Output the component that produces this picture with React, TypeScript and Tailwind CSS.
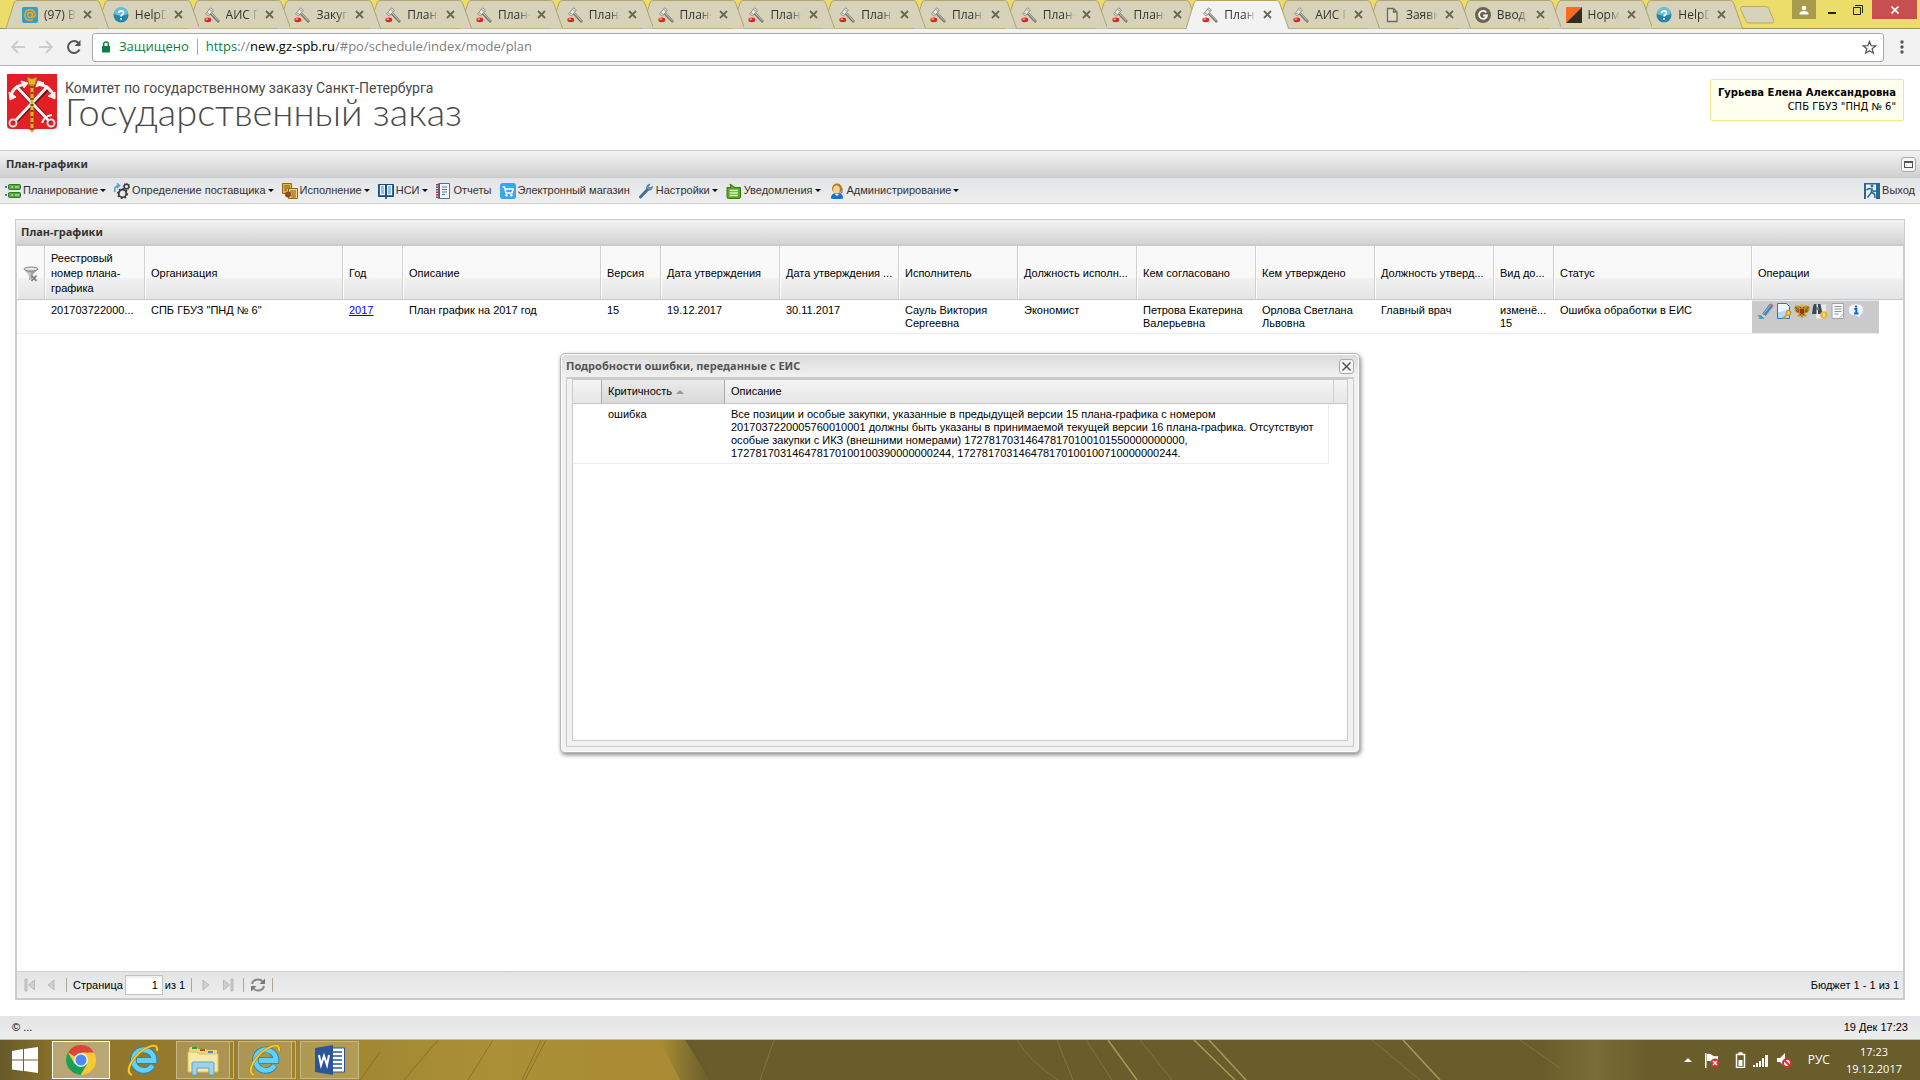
import type { ReactNode } from "react";

const tabs = [
  { icon: "mail", title: "(97) В" },
  { icon: "help", title: "HelpD" },
  { icon: "gavel", title: "АИС Г" },
  { icon: "gavel", title: "Закуп" },
  { icon: "gavel", title: "План-" },
  { icon: "gavel", title: "План-" },
  { icon: "gavel", title: "План-" },
  { icon: "gavel", title: "План-" },
  { icon: "gavel", title: "План-" },
  { icon: "gavel", title: "План-" },
  { icon: "gavel", title: "План-" },
  { icon: "gavel", title: "План-" },
  { icon: "gavel", title: "План-" },
  { icon: "gavel", title: "План-", active: true },
  { icon: "gavel", title: "АИС Г" },
  { icon: "page", title: "Заявк" },
  { icon: "g", title: "Ввод" },
  { icon: "norm", title: "Норм" },
  { icon: "help", title: "HelpD" },
];

const menu = [
  { icon: "plan", label: "Планирование", arrow: true },
  { icon: "gears", label: "Определение поставщика", arrow: true },
  { icon: "exec", label: "Исполнение", arrow: true },
  { icon: "book", label: "НСИ", arrow: true },
  { icon: "report", label: "Отчеты", arrow: false },
  { icon: "cart", label: "Электронный магазин", arrow: false },
  { icon: "wrench", label: "Настройки", arrow: true },
  { icon: "note", label: "Уведомления", arrow: true },
  { icon: "admin", label: "Администрирование", arrow: true },
];

const columns = [
  { title: "Организация", value: 'СПБ ГБУЗ "ПНД № 6"' },
  { title: "Год", value: "2017", link: true },
  { title: "Описание", value: "План график на 2017 год" },
  { title: "Версия", value: "15" },
  { title: "Дата утверждения", value: "19.12.2017" },
  { title: "Дата утверждения ...", value: "30.11.2017" },
  { title: "Исполнитель", value: "Сауль Виктория Сергеевна" },
  { title: "Должность исполн...", value: "Экономист" },
  { title: "Кем согласовано", value: "Петрова Екатерина Валерьевна" },
  { title: "Кем утверждено", value: "Орлова Светлана Львовна" },
  { title: "Должность утверд...", value: "Главный врач" },
  { title: "Вид до...", value: "изменё... 15" },
  { title: "Статус", value: "Ошибка обработки в ЕИС" },
];

const operations = [
  { icon: "pencil", label: "Редактировать" },
  { icon: "docKey", label: "Подписать" },
  { icon: "eagle", label: "Отправить в ЕИС" },
  { icon: "search", label: "Просмотр" },
  { icon: "doc", label: "Документ" },
  { icon: "info", label: "Подробности ошибки" },
];

const icons: Record<string, ReactNode> = {
  mail: (
    <>
      <rect width="16" height="16" rx="2" fill="#2f9fd0" />
      <circle cx="8" cy="8" r="2.4" fill="none" stroke="#f5a623" strokeWidth="1.5" />
      <path d="M10.4 5.6v3.2c0 2 2.9 1.5 2.9-.8A5.3 5.3 0 1 0 11 12.4" fill="none" stroke="#f5a623" strokeWidth="1.5" />
    </>
  ),
  help: (
    <>
      <circle cx="8" cy="8" r="7.5" fill="#2686a8" />
      <path d="M1 7a7 7 0 0 1 14 0q-7 3-14 0" fill="#69bfd4" />
      <path d="M5.8 6q.2-2.2 2.3-2.2 2.3 0 2.3 2 0 1.2-1.2 1.9Q8.100 8.3 8.1 9.5M8.1 11v1.7" fill="none" stroke="#fff" strokeWidth="1.7" />
    </>
  ),
  gavel: (
    <>
      <path d="M6 5.500l9 9.500" stroke="#77756c" strokeWidth="2.600" />
      <path d="M6.500 5.500l8 8.500" stroke="#cfcdc3" />
      <path d="M1.500 7L6.500.800 9.500 3 4.500 9z" fill="#e9e8e2" stroke="#8e8c82" strokeWidth=".9" />
      <path d="M2.600 5.600l3 2M5.300 2.200l3 2.200" stroke="#8e8c82" strokeWidth=".9" />
      <path d="M.5 12.200q0-1.700 3.300-1.700t3.300 1.700v1.300q0 1.700-3.300 1.700T.5 13.500z" fill="#d9281c" />
      <ellipse cx="2.800" cy="12.200" rx="1.500" ry=".9" fill="#f59a8c" />
    </>
  ),
  page: <path d="M3.5 1.5h6L13 5v9.500H3.5zM9.500 1.5V5H13" fill="#dedac6" stroke="#6f6b58" strokeWidth="1.3" />,
  g: (
    <>
      <circle cx="8" cy="8" r="8" fill="#6b6450" />
      <path d="M11.3 5.500A4 4 0 1 0 12 8.500H8.3" fill="none" stroke="#fff" strokeWidth="1.8" />
    </>
  ),
  norm: (
    <>
      <path d="M0 0h16L0 16z" fill="#ff6a1c" />
      <path d="M16 0v16H0z" fill="#352e1c" />
    </>
  ),
  plan: (
    <>
      <path d="M0 3h2v2H0zM0 11h2v2H0z" fill="#2f86b5" />
      <rect x="3.5" y="1.5" width="12" height="5" rx="1" fill="#5aa545" stroke="#2e7a22" />
      <rect x="3.5" y="9.5" width="12" height="5" rx="1" fill="#5aa545" stroke="#2e7a22" />
      <path d="M6 4h2m2 0h4M6 12h2m2 0h4" stroke="#d3efc8" strokeWidth="1.2" />
    </>
  ),
  gears: (
    <>
      <path d="M1 9Q-.5 3 5 2.5M3 .5l2.500 2L3 5" fill="none" stroke="#4ba3cf" strokeWidth="1.6" />
      <circle cx="8.5" cy="10.5" r="3.8" fill="#e8e8e8" stroke="#3c3c3c" strokeWidth="1.8" />
      <circle cx="8.5" cy="10.5" r="5" fill="none" stroke="#3c3c3c" strokeWidth="1.2" strokeDasharray="1.8 2" />
      <circle cx="12.5" cy="3.5" r="2.3" fill="#e8e8e8" stroke="#3c3c3c" strokeWidth="1.5" />
      <circle cx="12.5" cy="3.5" r="3.3" fill="none" stroke="#3c3c3c" strokeDasharray="1.2 1.3" />
    </>
  ),
  exec: (
    <>
      <path d="M.5.5h9v10h-9z" fill="#e3b747" stroke="#8c671a" />
      <path d="M2 3h6M2 5h6M2 7h3" stroke="#79581a" />
      <path d="M6.5 5.500h9v10h-9z" fill="#f0d384" stroke="#8c671a" />
      <path d="M8 8h6M8 10h6" stroke="#79581a" />
      <circle cx="6" cy="11.5" r="3" fill="#8d4a1c" />
      <circle cx="11.5" cy="13" r="2.5" fill="#c98725" />
    </>
  ),
  book: (
    <>
      <path d="M.5 1.5h15v12H.5z" fill="#2d6fa8" stroke="#174a78" />
      <path d="M2 2h5v10H2zM9 2h5v10H9z" fill="#eaf4fb" />
      <path d="M3 4h3M3 6h3M3 8h3M3 10h3M10 4h3M10 6h3M10 8h3M10 10h3" stroke="#4a8cc0" />
      <path d="M8 1v15" stroke="#174a78" strokeWidth="1.6" />
    </>
  ),
  report: (
    <>
      <path d="M2.5.5h11v15h-11z" fill="#f2f7fd" stroke="#56718f" />
      <path d="M1 1v14.5" stroke="#d2232a" strokeWidth="2" strokeDasharray="1.5 1" />
      <path d="M3.5 1v14" stroke="#d2232a" />
      <path d="M6 4h5M6 6.5h5M6 9h5M6 11.5h3" stroke="#4677b4" strokeWidth="1.2" />
    </>
  ),
  cart: (
    <>
      <rect width="16" height="16" rx="2.5" fill="#3aa6f2" />
      <path d="M2.5 4h2L6 10h6l1.200-4H5" fill="none" stroke="#fff" strokeWidth="1.5" />
      <circle cx="6.5" cy="12.3" r="1.2" fill="#fff" />
      <circle cx="11.3" cy="12.3" r="1.2" fill="#fff" />
    </>
  ),
  wrench: (
    <>
      <path d="M2.5 14L10 6" stroke="#456f8f" strokeWidth="3" strokeLinecap="round" />
      <path d="M14.5 3.500L12 5l-1.500-1.500L12 1Q8.500 1.500 8.500 5q1 3 4 2 2-1 2-3.500" fill="#6d96b3" stroke="#456f8f" strokeWidth=".7" />
    </>
  ),
  note: (
    <>
      <path d="M1 4.5h4L4 1l5 3.500h5.500v10q-.5 1-1.500 1H2.500Q1 15.500 1 14z" fill="#57a81f" stroke="#377a10" />
      <path d="M3.5 7.5H12M3.5 10H12M3.500 12.5H12" stroke="#e5f6d6" strokeWidth="1.3" />
    </>
  ),
  admin: (
    <>
      <path d="M2 15.5Q1.500 10 8 10t6 5.500q-6 1-12 0" fill="#176fd0" />
      <circle cx="8" cy="5.5" r="5" fill="#b9791b" />
      <ellipse cx="7.5" cy="6.5" rx="3.3" ry="4" fill="#f6cf99" />
      <path d="M13 5v4q-1 2-4 2" fill="none" stroke="#777" strokeWidth="1.2" />
      <path d="M5.5 11L8 13l2-2" fill="#fff" />
    </>
  ),
  exit: (
    <>
      <path d="M0 0h16v16H0z" fill="#2c678f" />
      <path d="M2 1.5h10V16H2z" fill="#e8f1f7" />
      <circle cx="8" cy="3" r="1.4" fill="#2c678f" />
      <path d="M2.5 7L5 5.500l3 .5-1 4-3.500 4.500M7.500 9.500l3 1.500.5 4M7.500 6l2 2.500 3-.5" fill="none" stroke="#2c678f" strokeWidth="1.5" />
    </>
  ),
  filter: (
    <>
      <path d="M1 3l5 6.500V14l3-1V9.500L15 3z" fill="#a3a3a3" />
      <path d="M4 5.500l3 4M7 6v7" stroke="#d5d5d5" />
      <ellipse cx="8" cy="3" rx="7" ry="2" fill="#e5e5e5" stroke="#858585" />
      <path d="M8.500 9.500l5 5.500M13.500 9.500l-5 5.500" stroke="#7c7c7c" strokeWidth="1.800" />
    </>
  ),
  pencil: (
    <>
      <path d="M4 11L11.5 1 15 3.500 7.500 13z" fill="#4b86b8" />
      <path d="M11 1.5L13 .5l2.500 2-1 1.500z" fill="#b9705c" />
      <path d="M4 11l-1 4 4.500-2z" fill="#e7cf9c" />
      <path d="M5.5 11l7-9" stroke="#90bade" />
      <path d="M0 13q3-1 5 2H1" fill="none" stroke="#2e9bc5" strokeWidth="1.3" />
    </>
  ),
  docKey: (
    <>
      <path d="M1.5.5h9l3 3v12h-12z" fill="#eef6ff" stroke="#2f74c8" />
      <path d="M2 9q6 0 11-4v10H2z" fill="#b9d9f8" />
      <circle cx="12.5" cy="10" r="2.5" fill="#f4c256" stroke="#c58514" />
      <path d="M11 11.5l-4.500 4M8 14l1.500 1.500" stroke="#dd9c22" strokeWidth="1.7" />
    </>
  ),
  eagle: (
    <>
      <path
        d="M8 4.500Q7 3 5.500 3.500L4 2 3 3 1.500 2.500 1 4 0 5l1 1.500L.5 8 2 8.500 2.500 10 4 10l1 1-2 2 2 .5L6.500 13 8 15.500 9.500 13l1.500.5 2-.5-2-2 1-1 1.500 0 .5-1.500 1.500-.5-.5-1.500L16 5l-1-1-.5-1.500L13 3l-1-1-1.500 1.500Q9 3 8 4.500"
        fill="#b79222"
      />
      <path d="M1.500 4l3.500 4M2 7.500l3 1.500M14.500 4L11 8M14 7.500L11 9M6 3.500l1 2M10 3.500l-1 2M6 12l1-1M10 12l-1-1" stroke="#5f4810" strokeWidth=".9" />
      <path d="M6 6h4v3.500L8 11.500 6 9.500z" fill="#b81f1b" />
      <path d="M6 1.500l1 .5 1-1.500L9 2l1-.5-.5 2h-3z" fill="#e2b929" />
    </>
  ),
  search: (
    <>
      <path d="M4 1.500h10v14H4z" fill="#e8e8e8" />
      <path d="M1 4l1-3h2.500v10H0zM6 1h2.500l2 10H6z" fill="#3b4854" />
      <path d="M4 4h3v3H4z" fill="#6b7c8a" />
      <circle cx="12" cy="12" r="3.8" fill="#e0b83e" />
      <path d="M12 10v4" stroke="#f7e5a6" strokeWidth="1.5" />
    </>
  ),
  doc: (
    <>
      <path d="M2 .5h11.500v15H2z" fill="#f7f7f7" stroke="#a3a3a3" />
      <path d="M4.500 3.500h7M4.500 6h7M4.500 8.500h7M4.500 11h4" stroke="#8f969c" />
      <path d="M9 15.500l4.500-4.500" stroke="#a3a3a3" />
    </>
  ),
  info: (
    <>
      <path d="M8 .5q7.500 0 7.500 6.500 0 4-3.500 5.500v3L8.500 13Q.5 13 .5 7T8 .5" fill="#f3f5ff" stroke="#c6c9e8" />
      <path d="M8 2.500v2M6.300 6h2v4.500M6 10.500h4.500" fill="none" stroke="#1766d4" strokeWidth="2" />
    </>
  ),
};

function Icon({ name }: { name: string }) {
  return (
    <svg viewBox="0 0 16 16" className="size-4 shrink-0" aria-hidden="true">
      {icons[name]}
    </svg>
  );
}

function BrowserTab({ icon, title, active, order }: { icon: string; title: string; active?: boolean; order: number }) {
  return (
    <div className="relative h-[29px] min-w-0 flex-1" style={{ zIndex: order }}>
      <svg viewBox="0 0 103 29" preserveAspectRatio="none" className="absolute top-0 left-0 h-[29px] w-[113%]">
        <path
          d="M0 28.5L8 3Q9 .5 11 .5H91Q93 .5 94 3L103 28.5"
          fill={active ? "#f2f2f2" : "#d7d2b9"}
          stroke={active ? "#b3a35c" : "#aea571"}
        />
        {active && <path d="M1 28.5H102" stroke="#f2f2f2" />}
      </svg>
      <div className="relative flex h-full items-center pl-4">
        <Icon name={icon} />
        <span className="ml-1.5 w-8 whitespace-nowrap text-xs text-[#333] [mask-image:linear-gradient(to_right,black_65%,transparent)]">
          {title}
        </span>
        <button aria-label="Закрыть вкладку" className="ml-[7px]">
          <svg viewBox="0 0 9 9" className="size-[9px]">
            <path d="M1 1l7 7M8 1L1 8" stroke="#6a6757" strokeWidth="1.8" />
          </svg>
        </button>
      </div>
    </div>
  );
}

function Browser() {
  return (
    <header className="font-['Open_Sans','Noto_Sans',sans-serif]">
      <div className="relative flex h-[29px] bg-[#ecdc69] pl-1.5 shadow-[inset_0_-1px_#9d9250]">
        <div className="isolate flex min-w-0 flex-1">
          {tabs.map((tab, i) => (
            <BrowserTab key={i} {...tab} order={tab.active ? 50 : 30 - i} />
          ))}
        </div>
        <div className="flex w-[189px] items-start">
          <button aria-label="Новая вкладка" className="mt-1.5 ml-[9px]">
            <svg viewBox="0 0 35 18" className="h-[18px] w-[35px]">
              <path d="M3 .5H26Q28 .5 29 3L34 15q0 2-2 2H9q-2 0-3-2L.5 3Q.5.5 3 .5" fill="#d7d2b9" stroke="#b5aa6c" />
            </svg>
          </button>
          <button aria-label="Профиль" className="ml-[17px] flex h-[19px] w-6 items-center justify-center bg-[#a79c4c]">
            <svg viewBox="0 0 10 10" className="size-2.5" fill="#fff">
              <circle cx="5" cy="3" r="2.3" />
              <path d="M.5 9.5V8q1-2 4.500-2t4.500 2v1.500z" />
            </svg>
          </button>
          <button aria-label="Свернуть" className="ml-3 flex h-[19px] w-2 items-center">
            <span className="mt-1.5 h-0.5 w-2 bg-[#222]" />
          </button>
          <button aria-label="Восстановить" className="ml-[17px] flex h-[19px] items-center">
            <svg viewBox="0 0 10 10" className="size-2.5" fill="none" stroke="#222">
              <path d="M.5 2.5h7v7h-7zM2 .5h7.5V8" />
            </svg>
          </button>
          <button aria-label="Закрыть" className="ml-[9px] flex h-[19px] w-[45px] items-center justify-center bg-[#c84f50]">
            <svg viewBox="0 0 8 8" className="size-2" stroke="#fff" strokeWidth="1.6">
              <path d="M.5.5l7 7M7.5.5l-7 7" />
            </svg>
          </button>
        </div>
      </div>
      <div className="flex h-[37px] items-center border-b border-[#b3b3b3] bg-[#f2f2f2] pl-2.5">
        <button aria-label="Назад">
          <svg viewBox="0 0 16 16" className="size-4" fill="none" stroke="#ccc" strokeWidth="1.8">
            <path d="M15 8H2M8 2L2 8l6 6" />
          </svg>
        </button>
        <button aria-label="Вперёд" className="ml-3">
          <svg viewBox="0 0 16 16" className="size-4" fill="none" stroke="#ccc" strokeWidth="1.8">
            <path d="M1 8h13M8 2l6 6-6 6" />
          </svg>
        </button>
        <button aria-label="Обновить" className="ml-3">
          <svg viewBox="0 0 16 16" className="size-4" fill="none" stroke="#555" strokeWidth="2">
            <path d="M13.5 10.5A6 6 0 1 1 12.5 4" />
            <path d="M14.5 1v6h-6z" fill="#555" stroke="none" />
          </svg>
        </button>
        <div className="ml-2.5 flex h-[29px] min-w-0 flex-1 items-center rounded-[3px] border border-[#a9a9a9] bg-white pl-2">
          <svg viewBox="0 0 10 12" className="h-3 w-2.5" fill="#0b8043">
            <path d="M1 5h8v6.500H1z" />
            <path d="M2.7 5V3q0-2 2.300-2t2.300 2v2" fill="none" stroke="#0b8043" strokeWidth="1.4" />
          </svg>
          <span className="ml-2 text-[13px] text-[#0b8043]">Защищено</span>
          <span className="mx-2 h-4 w-px bg-[#aaa]" />
          <span className="min-w-0 flex-1 truncate text-[13px] text-[#808080]">
            <span className="text-[#0b8043]">https</span>://<span className="text-black">new.gz-spb.ru</span>/#po/schedule/index/mode/plan
          </span>
          <button aria-label="Добавить в закладки" className="mr-1.5">
            <svg viewBox="0 0 16 16" className="size-[15px]" fill="none" stroke="#555" strokeWidth="1.3">
              <path d="M8 1.500l1.800 4.600 4.900.2-3.900 3 1.400 4.800L8 11.400l-4.200 2.700 1.400-4.800-3.900-3 4.900-.2z" />
            </svg>
          </button>
        </div>
        <button aria-label="Меню" className="mr-4 ml-4">
          <svg viewBox="0 0 4 14" className="h-3.5 w-1" fill="#555">
            <circle cx="2" cy="2" r="1.7" />
            <circle cx="2" cy="7" r="1.7" />
            <circle cx="2" cy="12" r="1.7" />
          </svg>
        </button>
      </div>
    </header>
  );
}

function Emblem() {
  return (
    <svg viewBox="0 0 50 60" className="h-[60px] w-[50px] shrink-0" fill="none">
      <path d="M0 0h50v51q0 4-4 4H30q-4 0-5 4-1-4-5-4H4q-4 0-4-4z" fill="#e31f26" />
      <g stroke="#6d1317" strokeWidth="4.5">
        <path d="M11 14L43 48M41 14L8 48" />
      </g>
      <g stroke="#f2f2f2" strokeWidth="3">
        <path d="M9 12L42 47M41 12L9 46" />
        <path d="M4 24Q4 13 18 10" />
        <path d="M2 18l1 8 6-3zM14 7l7 2-4 5z" fill="#f2f2f2" strokeWidth="1" />
        <path d="M31 10q13 2 16 13" />
        <path d="M29 13l2-6 6 2zM41 22l7 3 0-7z" fill="#f2f2f2" strokeWidth="1" />
        <path d="M35 49q2-7 10-8" strokeWidth="2" />
      </g>
      <circle cx="6" cy="49" r="3.5" stroke="#ddd" strokeWidth="2" />
      <circle cx="44" cy="49" r="3.5" stroke="#ddd" strokeWidth="2" />
      <path d="M25 9v48" stroke="#e7b622" strokeWidth="3" />
      <path d="M25 12v44" stroke="#7a4f12" strokeDasharray="2 4" strokeWidth="3" />
      <path d="M20 3l5 2 5-2-2 8h-6z" fill="#e7b622" stroke="#a5741a" />
    </svg>
  );
}

function MenuArrow() {
  return <span className="border-x-[3px] border-t-[3px] border-x-transparent border-t-black" />;
}

function SiteHeader() {
  return (
    <div className="flex h-[84px] items-start justify-between pt-2 pr-4 pl-[7px]">
      <div className="flex">
        <Emblem />
        <div className="ml-2 text-[#4a4a4a]">
          <div className="pt-1 font-['Roboto','Liberation_Sans',sans-serif] text-sm leading-5">
            Комитет по государственному заказу Санкт-Петербурга
          </div>
          <h1 className="font-['Lato','Inter',sans-serif] text-[38px] leading-[26px] font-light">Государственный заказ</h1>
        </div>
      </div>
      <div className="mt-[5px] rounded-xs border border-[#f0e68c] bg-[#fffff0] px-[7px] py-1.5 text-right font-['DejaVu_Sans',sans-serif] text-[10px] leading-[14px] text-black">
        <b>Гурьева Елена Александровна</b>
        <div>СПБ ГБУЗ "ПНД № 6"</div>
      </div>
    </div>
  );
}

function PlanTable() {
  const th = "border-r border-b border-[#d0d0d0] border-b-[#c5c5c5] pt-0.5 pr-1 pl-1.5 text-left align-middle font-normal leading-[15px] shadow-[inset_1px_0_#fff]";
  const td = "border-b border-[#ededed] pt-1 pr-1 pb-[3px] pl-1.5 align-top leading-[13px]";

  return (
    <table className="w-full table-fixed border-separate border-spacing-0 text-[11px] text-black">
      <colgroup>
        <col className="w-7" />
        <col className="w-[100px]" />
        <col className="w-[198px]" />
        <col className="w-[60px]" />
        <col className="w-[198px]" />
        <col className="w-[60px]" />
        <col className="w-[119px]" span={7} />
        <col className="w-[60px]" />
        <col className="w-[198px]" />
        <col className="w-[127px]" />
        <col />
      </colgroup>
      <thead>
        <tr className="h-[54px] bg-linear-to-b from-[#f9f9f9] from-60% via-[#f1f1f1] via-60% to-[#e3e4e6]">
          <th className={th}>
            <Icon name="filter" />
          </th>
          <th className={th}>Реестровый номер плана-графика</th>
          {columns.map((col) => (
            <th key={col.title} className={`${th} whitespace-nowrap`}>
              {col.title}
            </th>
          ))}
          <th colSpan={2} className={`${th} border-r-0`}>
            Операции
          </th>
        </tr>
      </thead>
      <tbody>
        <tr>
          <td className={td} />
          <td className={td}>201703722000...</td>
          {columns.map((col) => (
            <td key={col.title} className={td}>
              {col.link ? (
                <a href="#year" className="text-[#00f] underline">
                  {col.value}
                </a>
              ) : (
                col.value
              )}
            </td>
          ))}
          <td className="border-t border-b border-[#ededed] bg-[#cacaca] pt-0.5 pl-1.5 align-top">
            <div className="flex gap-0.5">
              {operations.map((op) => (
                <button key={op.icon} aria-label={op.label}>
                  <Icon name={op.icon} />
                </button>
              ))}
            </div>
          </td>
          <td />
        </tr>
      </tbody>
    </table>
  );
}

function Separator() {
  return <span className="h-3.5 w-px bg-[#aca899]" />;
}

function PagerButton({ label, d }: { label: string; d: string }) {
  return (
    <button aria-label={label} className="flex size-4 items-center justify-center">
      <svg viewBox="0 0 12 14" className="h-3.5 w-3" fill="#cfcfcf" stroke="#aaa" strokeWidth=".7">
        <path d={d} />
      </svg>
    </button>
  );
}

function Pager() {
  return (
    <div className="flex h-[27px] items-center border-t border-[#d0d0d0] bg-linear-to-b from-[#e3e4e6] to-[#eee] pr-1 pl-[5px] text-[11px] text-black">
      <PagerButton label="Первая" d="M1 1h2v12H1zM10.5 2v10L4.500 7z" />
      <span className="w-[5px]" />
      <PagerButton label="Предыдущая" d="M9 2v10L3 7z" />
      <span className="w-[7px]" />
      <Separator />
      <label htmlFor="page" className="ml-1.5">
        Страница
      </label>
      <input
        id="page"
        defaultValue="1"
        className="mx-0.5 h-5 w-[38px] border border-[#c1c1c1] bg-white px-1 text-right text-[11px] shadow-[inset_0_2px_2px_#eee]"
      />
      <span className="mr-1.5">из 1</span>
      <Separator />
      <span className="w-1.5" />
      <PagerButton label="Следующая" d="M3 2v10l6-5z" />
      <span className="w-1.5" />
      <PagerButton label="Последняя" d="M1.500 2v10l6-5zM9 1h2v12H9z" />
      <span className="w-[7px]" />
      <Separator />
      <button aria-label="Обновить список" className="mx-1.5">
        <svg viewBox="0 0 16 16" className="size-4" fill="none" stroke="#888" strokeWidth="2">
          <path d="M2 7Q3 2.500 8 2.500q3 0 4.500 2M14 9q-1 4.500-6 4.500-3 0-4.500-2" />
          <path d="M15 1.500V7H9.500zM1 14.500V9h5.500z" fill="#777" stroke="none" />
        </svg>
      </button>
      <Separator />
      <span className="ml-auto">Бюджет 1 - 1 из 1</span>
    </div>
  );
}

function ErrorDialog() {
  const th = "border-b border-[#c5c5c5] px-1.5 text-left font-normal";

  return (
    <section
      role="dialog"
      aria-label="Подробности ошибки, переданные с ЕИС"
      className="flex h-[400px] w-[800px] flex-col rounded-[5px] border border-[#b5b5b5] bg-[#f1f1f1] px-[5px] pb-[5px] shadow-[1px_2px_4px_#888,inset_0_0_0_1px_#fff]"
    >
      <div className="-mx-1 mt-px flex h-[22px] items-center justify-between rounded-t bg-linear-to-b from-[#dcdcdc] to-[#f1f1f1] px-1">
        <h2 className="font-['Noto_Sans','Open_Sans',sans-serif] text-[11px] leading-4 font-bold text-[#555]">
          Подробности ошибки, переданные с ЕИС
        </h2>
        <button aria-label="Закрыть окно" className="flex size-[15px] items-center justify-center rounded-[3px] border border-[#aaa] bg-[#f5f5f5]">
          <svg viewBox="0 0 9 9" className="size-[9px]" stroke="#555" strokeWidth="1.5">
            <path d="M.5.5l8 8M8.500.5l-8 8" />
          </svg>
        </button>
      </div>
      <div className="flex flex-1 border border-t-2 border-[#cbcbcb] px-px pb-px">
        <div className="flex flex-1 bg-[#f1f1f1] px-1 pb-1">
          <div className="flex-1 border border-[#cbcbcb] bg-white">
            <table className="w-full table-fixed border-separate border-spacing-0 text-[11px] text-black">
              <colgroup>
                <col className="w-7" />
                <col className="w-[124px]" />
                <col />
                <col className="w-[5px]" />
                <col className="w-[13px]" />
              </colgroup>
              <thead>
                <tr className="h-6 bg-linear-to-b from-[#f5f5f5] to-[#e6e6e6]">
                  <th className={th} aria-label="Номер" />
                  <th className={`${th} border-x border-x-[#aaa] bg-linear-to-b from-[#ebebeb] to-[#d9d9d9]`}>
                    <span className="flex items-center gap-1">
                      Критичность
                      <span className="border-x-4 border-b-4 border-x-transparent border-b-[#999]" />
                    </span>
                  </th>
                  <th colSpan={2} className={`${th} border-r border-r-[#d0d0d0]`}>
                    Описание
                  </th>
                  <th className={th} aria-label="Меню" />
                </tr>
              </thead>
              <tbody>
                <tr className="align-top leading-[13px]">
                  <td className="border-b border-[#ededed]" />
                  <td className="border-b border-[#ededed] px-[7px] pt-1">ошибка</td>
                  <td className="border-r border-b border-[#ededed] px-1.5 pt-1 pb-[3px]">
                    Все позиции и особые закупки, указанные в предыдущей версии 15 плана-графика с номером
                    2017037220005760010001 должны быть указаны в принимаемой текущей версии 16 плана-графика. Отсутствуют
                    особые закупки с ИКЗ (внешними номерами) 172781703146478170100101550000000000,
                    172781703146478170100100390000000244, 172781703146478170100100710000000244.
                  </td>
                  <td colSpan={2} />
                </tr>
              </tbody>
            </table>
          </div>
        </div>
      </div>
    </section>
  );
}

function IeLogo() {
  return (
    <svg viewBox="0 0 32 32" className="size-8" fill="none">
      <path d="M25.5 21.5A10.3 10.3 0 1 1 27 16.500H10" stroke="#1b85bd" strokeWidth="6.500" />
      <path d="M25.5 21.5A10.3 10.3 0 1 1 27 16.500H10" stroke="#63d0f5" strokeWidth="4.800" />
      <path d="M5 31Q-1 29 4 19 12 6 24 2q7-2 6 5" stroke="#b58108" strokeWidth="2.800" />
      <path d="M5 31Q-1 29 4 19 12 6 24 2q7-2 6 5" stroke="#f7cc33" strokeWidth="1.800" />
    </svg>
  );
}

function Taskbar() {
  const running = "flex h-[38px] items-center justify-center border border-[#c6b887] bg-[#d6cba0]/30";

  return (
    <footer className="relative flex h-10 items-center overflow-hidden bg-[#685d2b] font-['Open_Sans','Noto_Sans',sans-serif] text-xs text-white">
      <svg viewBox="0 0 1920 40" preserveAspectRatio="none" className="absolute inset-0 size-full" fill="none">
        <defs>
          <linearGradient id="wall">
            <stop offset="0" stopColor="#665a2b" />
            <stop offset=".08" stopColor="#8c722a" />
            <stop offset=".35" stopColor="#9b8030" />
            <stop offset=".7" stopColor="#ab9037" />
            <stop offset="1" stopColor="#a88a33" />
          </linearGradient>
          <linearGradient id="edge">
            <stop offset="0" stopColor="#655b2b" stopOpacity="0" />
            <stop offset="1" stopColor="#655b2b" />
          </linearGradient>
          <linearGradient id="glow">
            <stop offset="0" stopColor="#7a6c36" stopOpacity="0" />
            <stop offset=".5" stopColor="#7a6c36" />
            <stop offset="1" stopColor="#7a6c36" stopOpacity="0" />
          </linearGradient>
        </defs>
        <path d="M0 0H685L710 40H0z" fill="url(#wall)" />
        <path d="M660 0H690L712 40H680z" fill="url(#edge)" />
        <path d="M1540 0h110v40h-110z" fill="url(#glow)" />
        <path d="M438 0L404 40M493 0L468 40M541 0L522 40M546 0L525 40M380 12L360 40" stroke="#846b24" strokeOpacity=".8" />
        <path
          d="M774 0L760 40M1017 0Q1030 22 1058 40M1057 0L1073 40M1086 0L1112 40M1140 0L1172 40M1372 0L1420 40M1520 0L1560 28"
          stroke="#8b7b3c"
          strokeOpacity=".8"
        />
        <path d="M1108 0L1137 40M1194 0L1235 40M1209 0L1246 40M1403 0L1440 40" stroke="#aa9a56" strokeWidth="1.5" />
      </svg>
      <div className="relative flex items-center">
        <button aria-label="Пуск" className="flex w-[52px] justify-center pr-0.5">
          <svg viewBox="0 0 26 26" className="size-[26px]" fill="#fff">
            <path d="M0 4l11-2v10.500H0zM12 2l14-2v12.500H12zM0 13.500h11V24L0 22.500zM12 13.500h14V26l-14-2z" />
          </svg>
        </button>
        <button aria-label="Google Chrome" className="flex h-[38px] w-[58px] items-center justify-center border border-white bg-[#cabc96]/70">
          <svg viewBox="0 0 30 30" className="size-[30px]">
            <circle cx="15" cy="15" r="15" fill="#f9c835" />
            <path d="M15 15L2 7.500A15 15 0 0 1 28 7.500H15z" fill="#db4437" />
            <path d="M2 7.500A15 15 0 0 0 14.500 30l7-11.500H15L8.500 18.700z" fill="#1a9f5a" />
            <circle cx="15" cy="15" r="7" fill="#f1f1f1" />
            <circle cx="15" cy="15" r="5.500" fill="#4c8bf5" />
          </svg>
        </button>
        <button aria-label="Internet Explorer" className="flex w-[66px] justify-center">
          <IeLogo />
        </button>
        <button aria-label="Проводник" className={`${running} w-[54px]`}>
          <svg viewBox="0 0 32 32" className="size-8">
            <path d="M2 5l1-2h7l1 2h8l1 1h10v6H2z" fill="#ecd77e" />
            <path d="M5 3h5v2H5z" fill="#24a63d" />
            <path d="M13 5h5v2h-5z" fill="#cf4a2c" />
            <path d="M21 7h5v2h-5z" fill="#3b8ed2" />
            <path d="M1 8h9l2 2h19v18H1z" fill="#f6e9a5" stroke="#d9bf62" />
            <path d="M5 31V19q0-1 2-1h18q2 0 2 1v12h-5v-7H10v7z" fill="#9fd2ea" stroke="#5ea4c6" />
          </svg>
        </button>
        <span className="h-[38px] w-1 border-y border-r border-[#c6b887]" />
        <button aria-label="Internet Explorer, открытые окна" className={`${running} ml-1 w-[54px]`}>
          <IeLogo />
        </button>
        <span className="h-[38px] w-1 border-y border-r border-[#c6b887]" />
        <button aria-label="Microsoft Word" className={`${running} ml-1 w-[59px]`}>
          <svg viewBox="0 0 30 30" className="size-[30px]">
            <path d="M15 3h14.500v24H15z" fill="#fff" stroke="#2b579a" />
            <path d="M18 7h9M18 11h9M18 15h9M18 19h9M18 23h9" stroke="#2b579a" strokeWidth="1.5" />
            <path d="M0 3l18-3v30L0 27z" fill="#2b579a" />
            <path d="M4 10l2 10 3-9 3 9 2-10" fill="none" stroke="#fff" strokeWidth="2" />
          </svg>
        </button>
      </div>
      <div className="relative ml-auto flex items-center pr-[18px]">
        <svg viewBox="0 0 108 16" className="h-4 w-[108px]" fill="#fff">
          <path d="M0 10l4-4 4 4z" />
          <path d="M21 1h1.500v15H21zM23 2q3-1 5 1t6 1v7q-3 1-6-1t-5-1z" />
          <circle cx="31" cy="11" r="4.500" fill="#d33231" />
          <path d="M29 9l4 4M33 9l-4 4" stroke="#fff" strokeWidth="1.3" />
          <path d="M52.500 2.500h8v13h-8zM54.500 1h4" fill="none" stroke="#fff" strokeWidth="1.5" />
          <path d="M54.500 8h4v6h-4zM69 13h2v2h-2zM72 11h2v4h-2zM75 9h2v6h-2zM78 6h2v9h-2zM81 3h3v12h-3zM93 6h3l5-5v14l-5-5h-3z" />
          <circle cx="103" cy="11" r="4" fill="#fff" stroke="#d33231" strokeWidth="2" />
          <path d="M100 8l6 6" stroke="#d33231" strokeWidth="2" />
        </svg>
        <span className="ml-4">РУС</span>
        <div className="ml-4 text-center text-[11px] leading-[17px]">
          17:23
          <br />
          19.12.2017
        </div>
      </div>
    </footer>
  );
}

export default function App() {
  return (
    <div className="flex min-h-screen flex-col bg-white font-['Liberation_Sans',Arial,sans-serif]">
      <Browser />
      <main className="relative flex flex-1 flex-col">
        <SiteHeader />
        <div className="flex h-7 items-center justify-between border-y border-[#cbcbcb] bg-linear-to-b from-[#f3f3f3] to-[#d0d0d0] pr-1 pl-1.5">
          <h2 className="font-['Noto_Sans','Open_Sans',sans-serif] text-[11px] font-bold text-[#333]">План-графики</h2>
          <button aria-label="Развернуть" className="flex size-[15px] items-center justify-center rounded-[3px] border border-[#aaa] bg-[#f5f5f5]">
            <span className="h-[7px] w-[9px] border border-t-2 border-[#555]" />
          </button>
        </div>
        <nav className="flex h-[26px] items-center gap-2 border-b border-[#d0d0d0] bg-linear-to-b from-[#e3e4e6] to-[#eee] pr-[5px] pl-[5px] text-[11px] text-[#333]">
          {menu.map((item) => (
            <button key={item.label} className="flex items-center gap-0.5 whitespace-nowrap">
              <Icon name={item.icon} />
              {item.label}
              {item.arrow && <MenuArrow />}
            </button>
          ))}
          <button className="ml-auto flex items-center gap-0.5">
            <Icon name="exit" />
            Выход
          </button>
        </nav>
        <section className="mx-[15px] mt-[15px] mb-4 flex flex-1 flex-col border border-b-2 border-[#cbcbcb]">
          <h2 className="flex h-[26px] items-center border-b-2 border-[#cbcbcb] bg-linear-to-b from-[#f3f3f3] to-[#d3d3d3] pl-[5px] font-['Noto_Sans','Open_Sans',sans-serif] text-[11px] font-bold text-[#333]">
            План-графики
          </h2>
          <div className="flex flex-1 flex-col border-x border-[#cbcbcb]">
            <div className="flex-1">
              <PlanTable />
            </div>
            <Pager />
          </div>
        </section>
        <div className="flex h-6 items-center justify-between border-b border-[#bbb] bg-linear-to-b from-[#e3e4e6] to-[#eee] px-3 text-[11px] text-black">
          <span>© ...</span>
          <span>19 Дек 17:23</span>
        </div>
        <div className="absolute inset-0 flex items-center justify-center">
          <ErrorDialog />
        </div>
      </main>
      <Taskbar />
    </div>
  );
}
